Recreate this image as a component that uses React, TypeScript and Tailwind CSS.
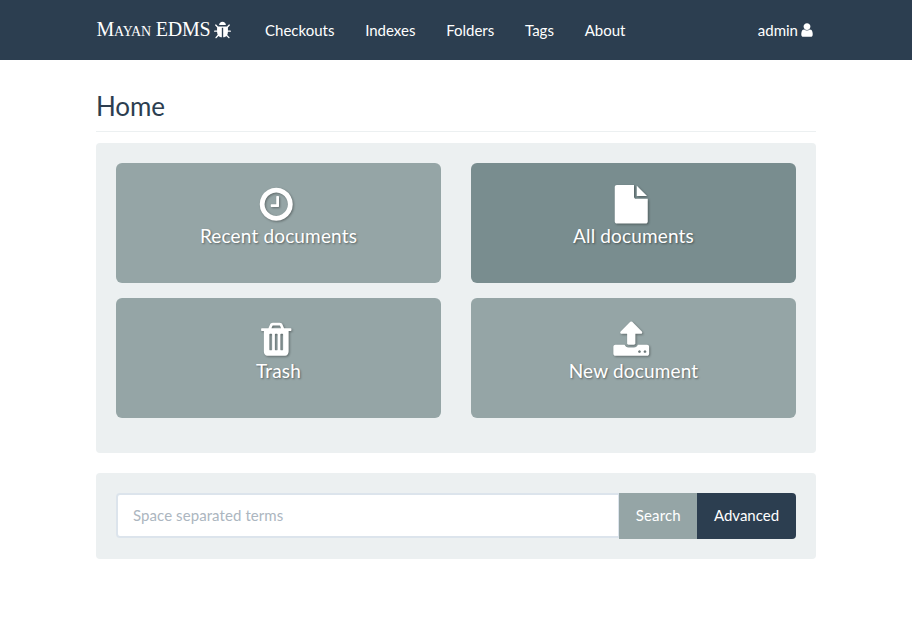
import type { ReactNode } from "react";

const ICONS = {
  bug: "M1696 960q0 26-19 45t-45 19h-224q0 171-67 290l208 209q19 19 19 45t-19 45q-18 19-45 19t-45-19l-198-197q-5 5-15 13t-42 28.5-65 36.5-82 29-97 13v-896h-128v896q-51 0-101.5-13.5t-87-33-66-39-43.5-32.5l-15-14-183 207q-20 21-48 21-24 0-43-16-19-18-20.5-44.5t15.5-46.5l202-227q-58-114-58-274h-224q-26 0-45-19t-19-45 19-45 45-19h224v-294l-173-173q-19-19-19-45t19-45 45-19 45 19l173 173h844l173-173q19-19 45-19t45 19 19 45-19 45l-173 173v294h224q26 0 45 19t19 45zm-480-576h-640q0-133 93.5-226.5t226.5-93.5 226.5 93.5 93.5 226.5z",
  user: "M1536 1399q0 109-62.5 187t-150.5 78h-854q-88 0-150.5-78t-62.5-187q0-85 8.5-160.5t31.5-152 58.5-131 94-89 134.5-34.5q131 128 313 128t313-128q76 0 134.5 34.5t94 89 58.5 131 31.5 152 8.5 160.5zm-256-887q0 159-112.5 271.5t-271.5 112.5-271.5-112.5-112.5-271.5 112.5-271.5 271.5-112.5 271.5 112.5 112.5 271.5z",
  clock: "M1024 544v448q0 14-9 23t-23 9h-320q-14 0-23-9t-9-23v-64q0-14 9-23t23-9h224v-352q0-14 9-23t23-9h64q14 0 23 9t9 23zm416 352q0-148-73-273t-198-198-273-73-273 73-198 198-73 273 73 273 198 198 273 73 273-73 198-198 73-273zm224 0q0 209-103 385.5t-279.5 279.5-385.5 103-385.5-103-279.5-279.5-103-385.5 103-385.5 279.5-279.5 385.5-103 385.5 103 279.5 279.5 103 385.5z",
  file: "M1152 512v-472q22 14 36 28l408 408q14 14 28 36h-472zm-128 32q0 40 28 68t68 28h544v1056q0 40-28 68t-68 28h-1344q-40 0-68-28t-28-68v-1600q0-40 28-68t68-28h800v544z",
  trash: "M704 1376v-704q0-14-9-23t-23-9h-64q-14 0-23 9t-9 23v704q0 14 9 23t23 9h64q14 0 23-9t9-23zm256 0v-704q0-14-9-23t-23-9h-64q-14 0-23 9t-9 23v704q0 14 9 23t23 9h64q14 0 23-9t9-23zm256 0v-704q0-14-9-23t-23-9h-64q-14 0-23 9t-9 23v704q0 14 9 23t23 9h64q14 0 23-9t9-23zm-544-992h448l-48-117q-7-9-17-11h-317q-10 2-17 11zm928 32v64q0 14-9 23t-23 9h-96v948q0 83-47 143.5t-113 60.5h-832q-66 0-113-58.5t-47-141.5v-952h-96q-14 0-23-9t-9-23v-64q0-14 9-23t23-9h309l70-167q15-37 54-63t79-26h320q40 0 79 26t54 63l70 167h309q14 0 23 9t9 23z",
  upload: "M1344 1472q0-26-19-45t-45-19-45 19-19 45 19 45 45 19 45-19 19-45zm256 0q0-26-19-45t-45-19-45 19-19 45 19 45 45 19 45-19 19-45zm128-224v320q0 40-28 68t-68 28h-1472q-40 0-68-28t-28-68v-320q0-40 28-68t68-28h427q21 56 70.5 92t110.5 36h256q61 0 110.5-36t70.5-92h427q40 0 68 28t28 68zm-325-648q-17 40-59 40h-256v448q0 26-19 45t-45 19h-256q-26 0-45-19t-19-45v-448h-256q-42 0-59-40-17-39 14-69l448-448q18-19 45-19t45 19l448 448q31 30 14 69z",
};

type IconName = keyof typeof ICONS;

function Icon({ name, className }: { name: IconName; className: string }) {
  return (
    <svg viewBox="0 0 1792 1792" fill="currentColor" aria-hidden="true" className={className}>
      <path d={ICONS[name]} />
    </svg>
  );
}

function NavLink({ children }: { children: ReactNode }) {
  return <a href="#" className="pl-[15px] pr-[15.75px]">{children}</a>;
}

function Tile({ icon, label, active = false }: { icon: IconName; label: string; active?: boolean }) {
  return (
    <a
      href="#"
      className={`flex h-[120px] flex-col items-center rounded-md pt-[22px] text-[19px] leading-[27px] text-white ${active ? "bg-[#798d8f]" : "bg-[#95a5a6]"}`}
    >
      <Icon name={icon} className="mr-[4px] size-[38.5px] shrink-0 overflow-visible drop-shadow-[1px_1px_1px_rgba(0,0,0,0.35)]" />
      <span className="-mt-[1.5px] tracking-[0.16px] [text-shadow:1px_1px_2px_rgba(0,0,0,0.4)]">{label}</span>
    </a>
  );
}

export default function App() {
  return (
    <div className="min-h-[618px] bg-white font-['Lato',sans-serif] text-[15px] leading-[21px] text-[#2c3e50]">
      <nav className="h-[60px] bg-[#2c3e50] text-white">
        <div className="mx-auto flex h-full w-[720px] items-center">
          <a href="#" className="mr-[18px] flex w-[136px] items-center justify-between">
            <span className="-mt-0.5 whitespace-nowrap pl-[0.5px] font-['Liberation_Serif',serif] text-[20px] tracking-[-0.2px] [font-variant:small-caps]">Mayan EDMS</span>
            <Icon name="bug" className="size-[19px]" />
          </a>
          <div className="flex">
            <NavLink>Checkouts</NavLink>
            <NavLink>Indexes</NavLink>
            <NavLink>Folders</NavLink>
            <NavLink>Tags</NavLink>
            <NavLink>About</NavLink>
          </div>
          <a href="#" className="ml-auto mr-px flex items-center">
            admin
            <Icon name="user" className="ml-px size-[16px]" />
          </a>
        </div>
      </nav>
      <main className="mx-auto w-[720px]">
        <h1 className="h-[72px] border-b border-[#ecf0f1] pt-[31px] text-[26px] leading-[30px] tracking-[-0.1px]">Home</h1>
        <section className="mt-[11px] grid h-[310px] grid-cols-2 content-start gap-x-[30px] gap-y-[15px] rounded bg-[#ecf0f1] p-5">
          <Tile icon="clock" label="Recent documents" />
          <Tile icon="file" label="All documents" active />
          <Tile icon="trash" label="Trash" />
          <Tile icon="upload" label="New document" />
        </section>
        <form className="mt-5 flex h-[86px] items-start rounded bg-[#ecf0f1] p-5">
          <input
            type="text"
            placeholder="Space separated terms"
            className="h-[45px] w-[503px] rounded-l border-2 border-r-[1px] border-[#dce4ec] bg-white px-[15px] pb-[2px] tracking-[0.08px] placeholder:text-[#acb6c0] placeholder:opacity-100"
          />
          <button type="button" className="h-[46px] w-[78px] bg-[#95a5a6] pb-[2px] pl-[0.5px] tracking-[0.1px] text-white">Search</button>
          <button type="button" className="h-[46px] w-[99px] rounded-r bg-[#2c3e50] pb-[2px] text-white">Advanced</button>
        </form>
      </main>
    </div>
  );
}
